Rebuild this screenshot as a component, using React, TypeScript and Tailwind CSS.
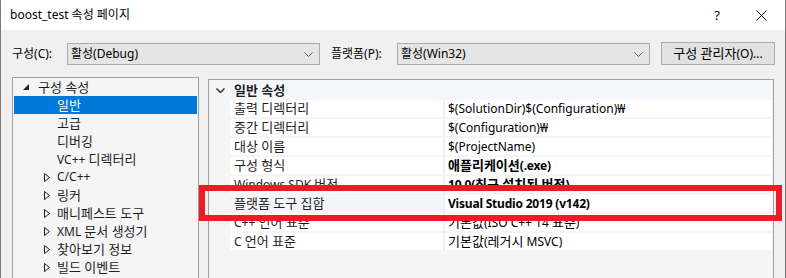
const font = "font-['Noto_Sans','Noto_Sans_CJK_KR',sans-serif]";

const treeItems: { label: string; level: number; kind: "open" | "closed" | "leaf"; selected?: boolean }[] = [
  { label: "구성 속성", level: 0, kind: "open" },
  { label: "일반", level: 1, kind: "leaf", selected: true },
  { label: "고급", level: 1, kind: "leaf" },
  { label: "디버깅", level: 1, kind: "leaf" },
  { label: "VC++ 디렉터리", level: 1, kind: "leaf" },
  { label: "C/C++", level: 1, kind: "closed" },
  { label: "링커", level: 1, kind: "closed" },
  { label: "매니페스트 도구", level: 1, kind: "closed" },
  { label: "XML 문서 생성기", level: 1, kind: "closed" },
  { label: "찾아보기 정보", level: 1, kind: "closed" },
  { label: "빌드 이벤트", level: 1, kind: "closed" },
];

const props: { name: string; value: string; bold?: boolean; active?: boolean }[] = [
  { name: "출력 디렉터리", value: "$(SolutionDir)$(Configuration)₩" },
  { name: "중간 디렉터리", value: "$(Configuration)₩" },
  { name: "대상 이름", value: "$(ProjectName)" },
  { name: "구성 형식", value: "애플리케이션(.exe)", bold: true },
  { name: "Windows SDK 버전", value: "10.0(최근 설치된 버전)", bold: true },
  { name: "플랫폼 도구 집합", value: "Visual Studio 2019 (v142)", bold: true, active: true },
  { name: "C++ 언어 표준", value: "기본값(ISO C++ 14 표준)" },
  { name: "C 언어 표준", value: "기본값(레거시 MSVC)" },
];

// Hangul runs get a slightly bigger size so they take Malgun Gothic's width
const Ko = ({ text, latin = "" }: { text: string; latin?: string }) => (
  <span className="whitespace-pre">
    {text.split(/([\uAC00-\uD7A3]+(?:\s+[\uAC00-\uD7A3]+)*)/).map((part, i) =>
      part === "" ? null : /[\uAC00-\uD7A3]/.test(part) ? (
        <span key={i} className="text-[13px]">{part}</span>
      ) : (
        <span key={i} className={latin}>{part}</span>
      ),
    )}
  </span>
);

const Chevron = () => (
  <svg width="9" height="5" viewBox="0 0 9 5" className="shrink-0">
    <path d="M0.5 0.5 L4.5 4.5 L8.5 0.5" fill="none" stroke="#606060" strokeWidth="1" />
  </svg>
);

const Combo = ({ text }: { text: string }) => (
  <div className="w-[253px] h-[22px] bg-[#e5e5e5] border border-[#acacac] flex items-center pl-[3px] pr-[6px]">
    <span className="flex-1 text-[#000]">{text}</span>
    <Chevron />
  </div>
);

function TreeRow({ item }: { item: (typeof treeItems)[number] }) {
  return (
    <div
      className={
        "h-[18px] flex items-center mx-[1px] " +
        (item.selected ? "bg-[#0078d7] text-white" : "text-[#1e1e1e]")
      }
    >
      <div className={item.level === 0 ? "w-[15px] shrink-0 flex justify-end" : "w-[36px] shrink-0 flex justify-end"}>
        {item.kind === "open" && (
          <svg width="6" height="6" viewBox="0 0 6 6">
            <path d="M6 0 L6 6 L0 6 Z" fill="#1e1e1e" />
          </svg>
        )}
        {item.kind === "closed" && (
          <svg width="6" height="9" viewBox="0 0 6 9">
            <path d="M0.5 0.5 L5.5 4.5 L0.5 8.5 Z" fill="none" stroke="#1e1e1e" strokeWidth="1" />
          </svg>
        )}
      </div>
      <span className={item.level === 0 ? "pl-[9px]" : "pl-[7px]"}>
        <Ko text={item.label} />
      </span>
    </div>
  );
}

export default function App() {
  return (
    <div className={`${font} relative w-[786px] h-[278px] overflow-hidden bg-[#f0f0f0] border-x border-[#7a7a7a] text-[12px] leading-none`}>
      <div className="h-[30px] bg-white flex items-center pl-[9px] pr-[18px]">
        <span className="flex-1 text-[#000] text-[12px]">boost_test 속성 페이지</span>
        <span className="text-[13px] text-[#000] mr-[36px]">?</span>
        <svg width="11" height="11" viewBox="0 0 11 11">
          <path d="M0.5 0.5 L10.5 10.5 M10.5 0.5 L0.5 10.5" stroke="#000" strokeWidth="1" />
        </svg>
      </div>

      <div className="flex items-center mt-[13px] h-[22px] pl-[11px]">
        <span className="w-[55px]">구성(C):</span>
        <Combo text="활성(Debug)" />
        <span className="ml-[11px] w-[66px]">플랫폼(P):</span>
        <Combo text="활성(Win32)" />
        <div className="ml-[11px] w-[114px] h-[23px] bg-[#e1e1e1] border border-[#adadad] flex items-center justify-center -mt-[1px]">
          <Ko text="구성 관리자(O)..." />
        </div>
      </div>

      <div className="flex items-start mt-[12px] pl-[11px]">
        <div className="w-[187px] h-[210px] bg-[#f5f5f5] border border-[#a0a0a0] shrink-0">
          {treeItems.map((item) => (
            <TreeRow key={item.label} item={item} />
          ))}
        </div>

        <div className="ml-[9px] mt-[2px] w-[566px] h-[210px] bg-[#f5f5f5] border border-[#a0a0a0] flex flex-col">
          <div className="h-[20px] flex items-center">
            <div className="w-[21px] flex justify-center pl-[1px]">
              <svg width="9" height="5" viewBox="0 0 9 5">
                <path d="M0.5 0.5 L4.5 4.5 L8.5 0.5" fill="none" stroke="#333" strokeWidth="1.5" />
              </svg>
            </div>
            <div className="flex-1 h-full bg-[#f4f6fa] flex items-center pl-[4px] font-bold text-[#1e1e1e] mr-[1px]">
              <Ko text="일반 속성" />
            </div>
          </div>
          {props.map((p) => (
            <div key={p.name} className="h-[19px] flex">
              <div className="w-[21px]" />
              <div
                className={
                  "w-[213px] h-[17px] flex items-center pl-[4px] text-[#1e1e1e] " +
                  (p.active ? "bg-[#f2f5fa]" : "bg-white")
                }
              >
                <Ko text={p.name} />
              </div>
              <div className="w-[2px] bg-[#edf1f7]" />
              <div
                className={
                  "flex-1 h-[17px] flex items-center pl-[3px] bg-white mr-[1px] text-[#000] " +
                  (p.bold ? "font-bold" : "")
                }
              >
                <Ko text={p.value} latin={p.bold ? "tracking-[-0.2px]" : ""} />
              </div>
            </div>
          ))}
        </div>
      </div>

      <div className="absolute left-[198px] top-[185px] w-[583px] h-[36px] border-[6px] border-[#ed1c24]" />
    </div>
  );
}
